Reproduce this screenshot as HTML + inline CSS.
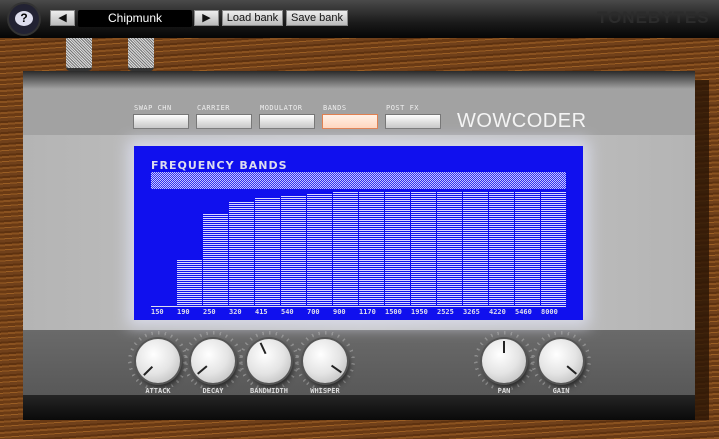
<!DOCTYPE html><html><head><style>
*{margin:0;padding:0;box-sizing:border-box}
body{width:719px;height:439px;overflow:hidden;position:relative;font-family:"Liberation Sans",sans-serif;
background:repeating-linear-gradient(176deg,#5e3210 0 2px,#8a5220 2px 4px,#6a3a14 4px 7px,#9a5e24 7px 8px,#70401a 8px 11px);}
.top{position:absolute;left:0;top:0;width:719px;height:38px;background:linear-gradient(#4a4a4a,#1a1a1a 60%,#050505)}
.b{position:absolute;top:10px;height:16px;background:linear-gradient(#eee,#bbb);border:1px solid #888;font-size:11px;color:#111;text-align:center;line-height:14px}
.panel{position:absolute;left:23px;top:71px;width:672px;height:349px;background:#a2a2a2}
.lbl{position:absolute;font-size:7px;color:#eee;letter-spacing:.5px;font-family:"DejaVu Sans Mono",monospace}
.btn{position:absolute;top:114px;width:56px;height:15px;background:linear-gradient(#fff,#ddd 60%,#c8c8c8);border:1px solid #777}
.k{position:absolute;width:44px;height:44px;border-radius:50%;background:radial-gradient(circle at 40% 35%,#fff,#e4e4e4 50%,#b0b0b0);box-shadow:0 0 0 2px #555,2px 4px 6px #222}
.t{position:absolute;width:60px;height:60px;border-radius:50%;opacity:.6;background:repeating-conic-gradient(from -135deg,#aaa 0 3deg,transparent 3deg 13.5deg);-webkit-mask:radial-gradient(circle,transparent 26px,#000 27px,#000 30px,transparent 30px);mask:radial-gradient(circle,transparent 26px,#000 27px,#000 30px,transparent 30px)}
.kl{position:absolute;top:387px;font-size:7px;color:#ddd;width:70px;text-align:center;font-family:"DejaVu Sans Mono",monospace;font-weight:bold}
.ind{position:absolute;left:21px;top:2px;width:2px;height:12px;background:#222;transform-origin:1px 20px}
</style></head><body>
<div class="top"></div>
<div style="position:absolute;left:9px;top:4px;width:30px;height:30px;border-radius:50%;background:#223;box-shadow:0 0 0 2px #333"></div>
<div style="position:absolute;left:15px;top:11px;width:18px;height:15px;border-radius:50%;background:#dde;color:#000;font-size:12px;font-weight:bold;text-align:center;line-height:15px">?</div>
<div class="b" style="left:50px;width:25px">◀</div>
<div style="position:absolute;left:78px;top:10px;width:114px;height:17px;background:#000;color:#fff;font-size:12px;text-align:center;line-height:17px;border-radius:2px">Chipmunk</div>
<div class="b" style="left:194px;width:25px">▶</div>
<div class="b" style="left:222px;width:61px">Load bank</div>
<div class="b" style="left:286px;width:62px">Save bank</div>
<div style="position:absolute;left:597px;top:8px;font-size:17px;font-weight:bold;color:#2c2c2c;letter-spacing:1px">TONEBYTES</div>
<div style="position:absolute;left:66px;top:38px;width:26px;height:33px;background:repeating-linear-gradient(45deg,#ddd 0 1px,#777 1px 2px);border-bottom:3px solid #333;border-radius:0 0 4px 4px"></div>
<div style="position:absolute;left:128px;top:38px;width:26px;height:33px;background:repeating-linear-gradient(45deg,#ddd 0 1px,#777 1px 2px);border-bottom:3px solid #333;border-radius:0 0 4px 4px"></div>
<div style="position:absolute;left:695px;top:80px;width:14px;height:340px;background:#2a1505;opacity:.8"></div>
<div class="panel">
<div style="position:absolute;left:0;top:0;width:672px;height:18px;background:linear-gradient(#2a2a2a,#a2a2a2)"></div>
<div style="position:absolute;left:0;top:64px;width:672px;height:196px;background:linear-gradient(90deg,#b4b4b4,#c8c8c8 50%,#b4b4b4)"></div>
<div style="position:absolute;left:0;top:259px;width:672px;height:65px;background:linear-gradient(#6a6a6a,#585858)"></div>
<div style="position:absolute;left:0;top:324px;width:672px;height:25px;background:linear-gradient(#252525,#0a0a0a)"></div>
</div>
<div class="lbl" style="left:134px;top:104px">SWAP CHN</div>
<div class="lbl" style="left:197px;top:104px">CARRIER</div>
<div class="lbl" style="left:260px;top:104px">MODULATOR</div>
<div class="lbl" style="left:323px;top:104px">BANDS</div>
<div class="lbl" style="left:386px;top:104px">POST FX</div>
<div class="btn" style="left:133px"></div><div class="btn" style="left:196px"></div><div class="btn" style="left:259px"></div>
<div class="btn" style="left:322px;background:linear-gradient(#fff0e6,#ffd8c0);border-color:#e08050"></div>
<div class="btn" style="left:385px"></div>
<div style="position:absolute;left:457px;top:110px;font-size:20px;color:#f4f4f4;letter-spacing:.5px">WOWCODER</div>
<div style="position:absolute;left:134px;top:146px;width:449px;height:174px;background:#1010ee;box-shadow:0 0 14px 6px #d8dae8"></div>
<div style="position:absolute;left:151px;top:159px;font-size:11px;color:#dde;font-weight:bold;letter-spacing:1px;font-family:'DejaVu Sans',sans-serif">FREQUENCY BANDS</div>
<div style="position:absolute;left:151px;top:172px;width:415px;height:17px;background:repeating-conic-gradient(#c8c8ff 0 25%,#3030f0 0 50%) 0 0/2px 2px"></div>
<div style="position:absolute;left:151px;top:306px;width:415px;height:1px;background:#dde"></div>
<svg style="position:absolute;left:0;top:0" width="719" height="439">
<defs><pattern id="h" width="4" height="2" patternUnits="userSpaceOnUse"><rect width="4" height="1" fill="#d8d8ff"/></pattern></defs>
<g fill="url(#h)"><rect x="177" y="260" width="25" height="45"/><rect x="203" y="214" width="25" height="91"/><rect x="229" y="202" width="25" height="103"/><rect x="255" y="198" width="25" height="107"/><rect x="281" y="196" width="25" height="109"/><rect x="307" y="194" width="25" height="111"/><rect x="333" y="192" width="25" height="113"/><rect x="359" y="192" width="25" height="113"/><rect x="385" y="192" width="25" height="113"/><rect x="411" y="192" width="25" height="113"/><rect x="437" y="192" width="25" height="113"/><rect x="463" y="192" width="25" height="113"/><rect x="489" y="192" width="25" height="113"/><rect x="515" y="192" width="25" height="113"/><rect x="541" y="192" width="25" height="113"/></g>
<g font-family="DejaVu Sans Mono" font-size="7" fill="#dde" font-weight="bold"><text x="151" y="314">150</text><text x="177" y="314">190</text><text x="203" y="314">250</text><text x="229" y="314">320</text><text x="255" y="314">415</text><text x="281" y="314">540</text><text x="307" y="314">700</text><text x="333" y="314">900</text><text x="359" y="314">1170</text><text x="385" y="314">1500</text><text x="411" y="314">1950</text><text x="437" y="314">2525</text><text x="463" y="314">3265</text><text x="489" y="314">4220</text><text x="515" y="314">5460</text><text x="541" y="314">8000</text></g>
</svg>
<div class="t" style="left:128px;top:331px"></div><div class="t" style="left:183px;top:331px"></div><div class="t" style="left:239px;top:331px"></div><div class="t" style="left:295px;top:331px"></div><div class="t" style="left:474px;top:331px"></div><div class="t" style="left:531px;top:331px"></div>
<div class="k" style="left:136px;top:339px"><div class="ind" style="transform:rotate(-135deg)"></div></div>
<div class="k" style="left:191px;top:339px"><div class="ind" style="transform:rotate(-130deg)"></div></div>
<div class="k" style="left:247px;top:339px"><div class="ind" style="transform:rotate(-25deg)"></div></div>
<div class="k" style="left:303px;top:339px"><div class="ind" style="transform:rotate(125deg)"></div></div>
<div class="k" style="left:482px;top:339px"><div class="ind"></div></div>
<div class="k" style="left:539px;top:339px"><div class="ind" style="transform:rotate(130deg)"></div></div>
<div class="kl" style="left:123px">ATTACK</div><div class="kl" style="left:178px">DECAY</div><div class="kl" style="left:234px">BANDWIDTH</div><div class="kl" style="left:290px">WHISPER</div><div class="kl" style="left:469px">PAN</div><div class="kl" style="left:526px">GAIN</div>
</body></html>
